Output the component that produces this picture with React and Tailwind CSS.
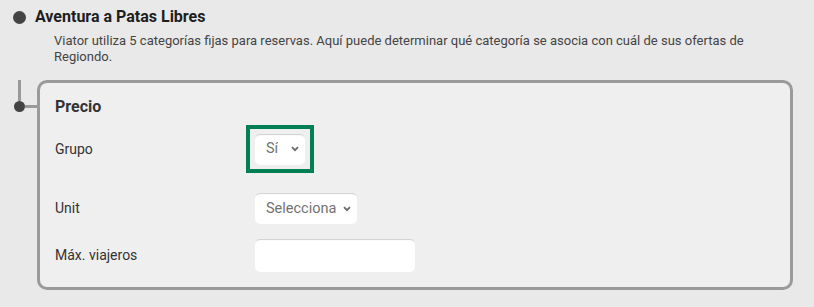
import React from "react";

function Chevron() {
  return (
    <svg width="8" height="6" viewBox="0 0 8 6" className="shrink-0">
      <path d="M1 1.2 L4 4.2 L7 1.2" fill="none" stroke="#6a6a6a" strokeWidth="1.8" />
    </svg>
  );
}

function FakeSelect({ value, width }) {
  return (
    <div
      className={`flex h-[31px] items-center justify-between rounded-[5px] bg-white pl-[11px] pr-[6px] text-[14.5px] text-[#727272] shadow-[inset_0_2px_1px_-1px_#cfcfcf] ${width}`}
    >
      <span className="overflow-hidden whitespace-nowrap">{value}</span>
      <Chevron />
    </div>
  );
}

export default function App() {
  return (
    <div
      className="h-[307px] w-[814px] overflow-hidden bg-[#e9e9e9]"
      style={{ fontFamily: "Roboto, 'Liberation Sans', sans-serif" }}
    >
      <div className="flex items-center pt-[8px]">
        <div className="ml-[13px] h-[13px] w-[13px] rounded-full bg-[#444]" />
        <h1 className="ml-[9px] text-[16px] font-bold leading-[18px] text-[#1e1e1e]">
          Aventura a Patas Libres
        </h1>
      </div>
      <p className="ml-[54px] mr-[22px] mt-[7px] text-[13px] leading-[16px] text-[#444]">
        Viator utiliza 5 categorías fijas para reservas. Aquí puede determinar qué categoría se asocia con cuál de sus ofertas de Regiondo.
      </p>
      <div className="mt-[15px] flex">
        <div className="flex w-[37px] flex-col">
          <div className="ml-[18px] h-[21px] w-[3px] bg-[#999]" />
          <div className="flex items-center">
            <div className="ml-[14px] h-[11px] w-[11px] rounded-full bg-[#444]" />
            <div className="h-[3px] flex-1 bg-[#999]" />
          </div>
        </div>
        <div className="h-[210px] w-[756px] rounded-[10px] border-[3px] border-[#9a9a9a] bg-[#efefef] pl-[15px] pt-[14px]">
          <h2 className="text-[16px] font-bold leading-[20px] text-[#333]">Precio</h2>
          <div className="mt-[8px] flex h-[48px] items-center">
            <div className="w-[191px] text-[14px] text-[#333]">Grupo</div>
            <div className="flex h-[48px] w-[68px] items-center border-4 border-[#007f52] pl-[5px]">
              <FakeSelect value="Sí" width="w-[50px]" />
            </div>
          </div>
          <div className="mt-[20px] flex h-[31px] items-center">
            <div className="w-[200px] text-[14px] text-[#333]">Unit</div>
            <FakeSelect value="Selecciona" width="w-[102px]" />
          </div>
          <div className="mt-[15px] flex h-[33px] items-center">
            <div className="w-[200px] text-[14px] text-[#333]">Máx. viajeros</div>
            <div className="h-[33px] w-[160px] rounded-[5px] bg-white shadow-[inset_0_2px_1px_-1px_#cfcfcf]" />
          </div>
        </div>
      </div>
    </div>
  );
}
